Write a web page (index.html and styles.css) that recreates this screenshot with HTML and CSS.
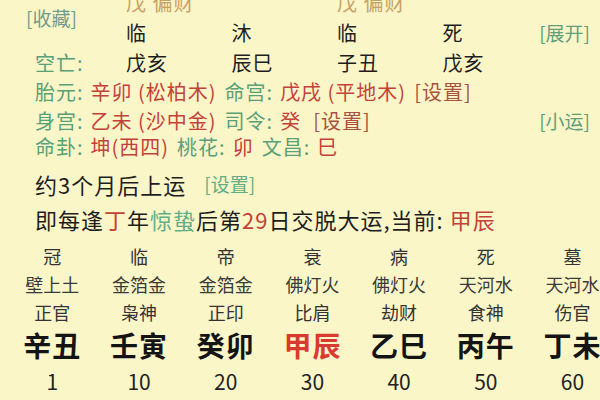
FILE: index.html
```html
<!DOCTYPE html>
<html lang="zh">
<head>
<meta charset="utf-8">
<link rel="stylesheet" href="styles.css">
</head>
<body>
<div class="page">
  <section class="top">
    <span class="fav">[收藏]</span>
    <div class="grid row r1">
      <span class="lbl"></span>
      <span class="tan">戊 偏财</span>
      <span></span>
      <span class="tan">戊 偏财</span>
      <span></span>
      <span></span>
    </div>
    <div class="grid row r2">
      <span class="lbl"></span>
      <span>临</span>
      <span>沐</span>
      <span>临</span>
      <span>死</span>
      <span class="green2">[展开]</span>
    </div>
    <div class="grid row r3">
      <span class="lbl green">空亡:</span>
      <span>戊亥</span>
      <span>辰巳</span>
      <span>子丑</span>
      <span>戊亥</span>
      <span></span>
    </div>
    <div class="line row r4">
      <span class="green">胎元:</span>
      <span class="red v">辛卯 (松柏木)</span>
      <span class="green k">命宫:</span>
      <span class="red v">戊戌 (平地木)</span>
      <span class="brown k">[设置]</span>
    </div>
    <div class="line row r5">
      <span class="green">身宫:</span>
      <span class="red v">乙未 (沙中金)</span>
      <span class="green k">司令:</span>
      <span class="red v">癸</span>
      <span class="brown k2">[设置]</span>
      <span class="btn-r green2">[小运]</span>
    </div>
    <div class="line row r6">
      <span class="green">命卦:</span>
      <span class="red v">坤(西四)</span>
      <span class="green k">桃花:</span>
      <span class="red v">卯</span>
      <span class="green k">文昌:</span>
      <span class="red v">巳</span>
    </div>
    <div class="line big r7">
      <span>约3个月后上运</span>
      <span class="green3 set">[设置]</span>
    </div>
    <div class="line big r8">
      <span>即每逢<span class="red">丁</span>年<span class="green3">惊蛰</span>后第<span class="red">29</span>日交脱大运,当前: <span class="red">甲辰</span></span>
    </div>
  </section>
  <section class="luck">
    <div class="col"><span class="a">冠</span><span class="b">壁上土</span><span class="c">正官</span><span class="d">辛丑</span><span class="e">1</span></div>
    <div class="col"><span class="a">临</span><span class="b">金箔金</span><span class="c">枭神</span><span class="d">壬寅</span><span class="e">10</span></div>
    <div class="col"><span class="a">帝</span><span class="b">金箔金</span><span class="c">正印</span><span class="d">癸卯</span><span class="e">20</span></div>
    <div class="col"><span class="a">衰</span><span class="b">佛灯火</span><span class="c">比肩</span><span class="d cur">甲辰</span><span class="e">30</span></div>
    <div class="col"><span class="a">病</span><span class="b">佛灯火</span><span class="c">劫财</span><span class="d">乙巳</span><span class="e">40</span></div>
    <div class="col"><span class="a">死</span><span class="b">天河水</span><span class="c">食神</span><span class="d">丙午</span><span class="e">50</span></div>
    <div class="col"><span class="a">墓</span><span class="b">天河水</span><span class="c">伤官</span><span class="d">丁未</span><span class="e">60</span></div>
  </section>
</div>
</body>
</html>
```

FILE: styles.css
```css
html, body {
  margin: 0;
  padding: 0;
}
body {
  width: 600px;
  height: 400px;
  overflow: hidden;
  background: #fbf6c8;
  font-family: "Noto Sans CJK SC", "Noto Sans", sans-serif;
  color: #1e1e1e;
}
.page {
  width: 600px;
}
.top {
  position: relative;
  margin-top: -12px;
}
.fav {
  position: absolute;
  left: 26px;
  top: 20px;
  font-size: 19px;
  line-height: 20px;
  color: #6f9c8c;
}
.row {
  font-size: 20px;
  letter-spacing: 1px;
}
.row > span {
  line-height: 22px;
}
.grid {
  display: grid;
  grid-template-columns: 91px 105.5px 105.5px 105.5px 1fr auto;
  padding-left: 35px;
  padding-right: 10px;
  align-items: center;
  white-space: nowrap;
}
.line {
  display: flex;
  align-items: center;
  padding-left: 35px;
  white-space: nowrap;
}
.r1 { height: 30px; }
.r2 { height: 30px; }
.r3 { height: 29px; }
.r4 { height: 30px; }
.r5 { height: 27px; }
.r6 { height: 26px; }
.r7 { height: 48px; }
.r8 { height: 22px; margin-bottom: 12px; }
.big {
  font-size: 22px;
  letter-spacing: 1px;
}
.big > span {
  line-height: 22px;
}
.tan { color: #c9a064; }
.green { color: #58a078; }
.green2 { color: #5f9f7c; font-size: 19px; letter-spacing: 0; }
.green3 { color: #62ad86; }
.red { color: #c4413a; }
.brown { color: #a8523e; }
.v { margin-left: 7px; }
.k { margin-left: 8px; }
.k2 { margin-left: 12px; }
.btn-r {
  margin-left: auto;
  padding-right: 10px;
}
.set {
  margin-left: 18px;
  font-size: 19px;
  letter-spacing: 0;
}
.luck {
  display: grid;
  grid-template-columns: repeat(7, 86.7px);
  margin-left: 9px;
}
.col {
  display: flex;
  flex-direction: column;
  align-items: center;
  white-space: nowrap;
}
.col span { display: block; }
.a { height: 28px; line-height: 28px; font-size: 18px; color: #333; }
.b { height: 28px; line-height: 28px; font-size: 18px; color: #3a3a3a; }
.c { height: 28px; line-height: 28px; font-size: 18px; color: #333; }
.d { height: 38px; line-height: 38px; font-size: 28px; font-weight: 700; color: #141414; letter-spacing: 1px; }
.d.cur { color: #d93a30; }
.e { height: 34px; line-height: 34px; font-size: 21px; color: #222; }
```
